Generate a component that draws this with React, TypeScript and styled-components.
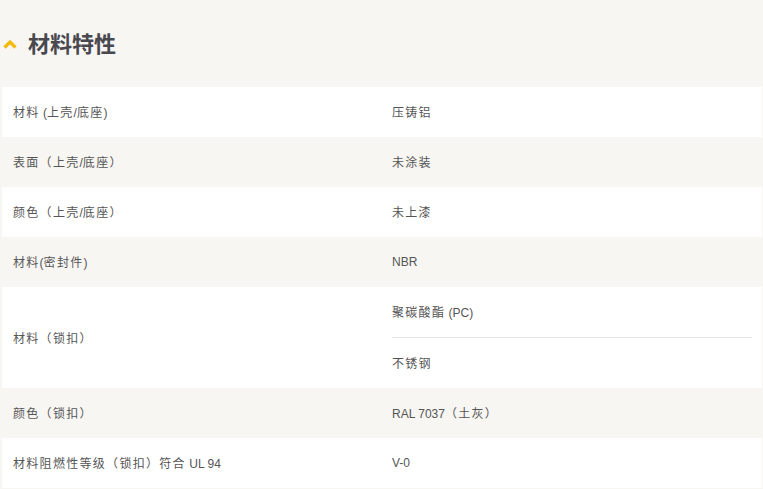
import React from "react";
import styled, { createGlobalStyle } from "styled-components";

const Global = createGlobalStyle`
  html, body { margin: 0; padding: 0; background: #f7f6f3; }
  body { font-family: "Liberation Sans", "Noto Sans CJK SC", sans-serif; }
`;

const Page = styled.div`
  width: 763px;
  height: 489px;
  background: #f7f6f3;
  box-sizing: border-box;
  padding: 0 1px 0 2px;
  overflow: hidden;
`;

const Header = styled.div`
  height: 87px;
  display: flex;
  align-items: center;
  gap: 11px;
  padding-left: 1px;
  box-sizing: border-box;
`;

const Title = styled.h2`
  margin: 0;
  font-family: "Noto Sans CJK SC", sans-serif;
  font-size: 22px;
  font-weight: 700;
  color: #48484e;
  line-height: 1;
  padding-bottom: 4px;
`;

const Table = styled.div`
  width: 760px;
  background: #fff;
`;

const Row = styled.div<{ $alt?: boolean }>`
  display: grid;
  grid-template-columns: 379px 1fr;
  background: ${(p) => (p.$alt ? "#f7f6f3" : "#ffffff")};
`;

const Cell = styled.div`
  min-height: 50px;
  display: flex;
  align-items: center;
  padding: 0 10px 1px 11px;
  box-sizing: border-box;
  font-size: 12px;
  color: #555555;
  white-space: pre;
`;

const Values = styled.div`
  display: flex;
  flex-direction: column;
  padding: 0 10px 0 11px;
`;

const SubValue = styled.div<{ $line?: boolean }>`
  height: ${(p) => (p.$line ? "51px" : "50px")};
  display: flex;
  align-items: center;
  padding-bottom: 1px;
  font-size: 12px;
  color: #555555;
  white-space: pre;
  box-sizing: border-box;
  border-bottom: ${(p) => (p.$line ? "1px solid #e6e6e6" : "none")};
`;

const Han = styled.span`
  font-family: "Noto Sans CJK SC", sans-serif;
  letter-spacing: 1.3px;
`;

const HAN_RUN = /([\u3000-\u303f\u4e00-\u9fff\uff00-\uffef]+)/;

const Text = ({ children }: { children: string }) => (
  <span>
    {children
      .split(HAN_RUN)
      .filter(Boolean)
      .map((part, i) =>
        /[\u3000-\u303f\u4e00-\u9fff\uff00-\uffef]/.test(part) ? (
          <Han key={i}>{part}</Han>
        ) : (
          <React.Fragment key={i}>{part}</React.Fragment>
        )
      )}
  </span>
);

const Chevron = () => (
  <svg width="14" height="10" viewBox="0 0 14 10">
    <path d="M1.5 8.5 L7 3 L12.5 8.5" fill="none" stroke="#f5b90a" strokeWidth="3.2" />
  </svg>
);

const rows: { label: string; values: string[] }[] = [
  { label: "材料 (上壳/底座)", values: ["压铸铝"] },
  { label: "表面（上壳/底座）", values: ["未涂装"] },
  { label: "颜色（上壳/底座）", values: ["未上漆"] },
  { label: "材料(密封件)", values: ["NBR"] },
  { label: "材料（锁扣）", values: ["聚碳酸酯 (PC)", "不锈钢"] },
  { label: "颜色（锁扣）", values: ["RAL 7037（土灰）"] },
  { label: "材料阻燃性等级（锁扣）符合 UL 94", values: ["V-0"] },
];

export default function App() {
  return (
    <Page>
      <Global />
      <Header>
        <Chevron />
        <Title>材料特性</Title>
      </Header>
      <Table>
        {rows.map((r, i) => (
          <Row key={i} $alt={i % 2 === 1}>
            <Cell>
              <Text>{r.label}</Text>
            </Cell>
            {r.values.length === 1 ? (
              <Cell>
                <Text>{r.values[0]}</Text>
              </Cell>
            ) : (
              <Values>
                {r.values.map((v, j) => (
                  <SubValue key={j} $line={j < r.values.length - 1}>
                    <Text>{v}</Text>
                  </SubValue>
                ))}
              </Values>
            )}
          </Row>
        ))}
      </Table>
    </Page>
  );
}
